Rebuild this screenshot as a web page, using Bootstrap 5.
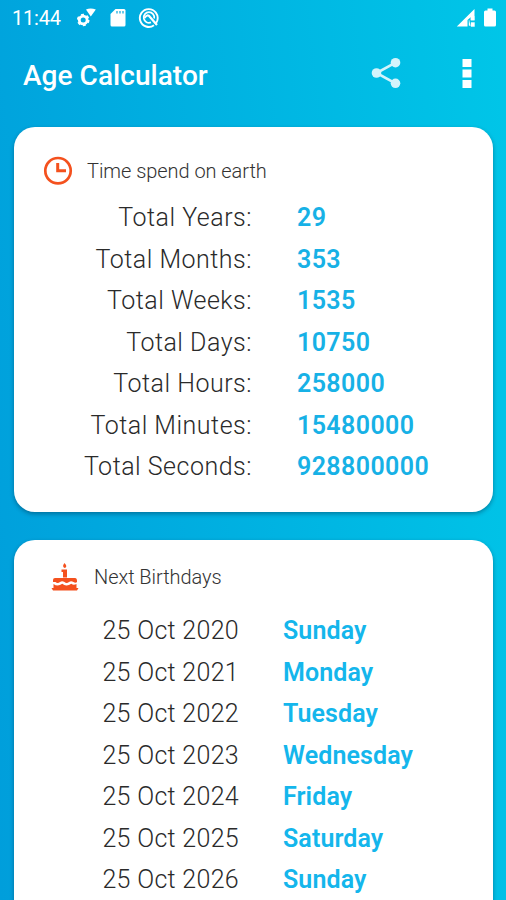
<!DOCTYPE html>
<html lang="en">
<head>
<meta charset="utf-8">
<meta name="viewport" content="width=device-width, initial-scale=1">
<title>Age Calculator</title>
<link href="https://cdn.jsdelivr.net/npm/bootstrap@5.3.0/dist/css/bootstrap.min.css" rel="stylesheet">
<style>
body{font-family:Roboto,"Noto Sans",sans-serif;height:900px;overflow:hidden;background:linear-gradient(84deg,#009edb 0%,#00c6e8 100%)}
.statusbar{height:36px;padding:0 9px 0 12px;font-size:20px;font-weight:450;letter-spacing:-.2px;line-height:36px}
.sd-icon{margin-left:13px}
.sync-icon{margin-left:12px}
.battery-icon{margin-left:8px}
.appbar{height:91px;padding:0 33px 14px 23px}
.appbar h1{font-size:28px;font-weight:500;letter-spacing:.05px;line-height:32px;padding-top:2px}
.share-icon{margin-bottom:3px}
.more-icon{margin:0 0 3px 60px}
.panel{margin:0 13px 0 14px;border:0;border-radius:21px;box-shadow:0 2px 4px rgba(0,50,80,.45)}
.panel-time{height:385px;margin-bottom:28px;padding-top:29px}
.panel-birth{height:400px;padding-top:22px}
.panel-title{font-size:20px;line-height:30px;letter-spacing:-.05px;color:#333;font-weight:330}
.clock-icon{margin-left:29px;margin-right:14px}
.cake-icon{margin-left:37px;margin-right:15px}
.line{line-height:41.5px;font-size:25px;color:#2a2a2a}
.line .key{font-weight:300;text-align:right;white-space:nowrap}
.line .val{font-weight:600}
.panel-time .lines{padding-top:11px}
.panel-time .key{width:238px;letter-spacing:.5px}
.panel-time .val{margin-left:45px;letter-spacing:.4px;color:#17b1e6}
.panel-birth .lines{padding-top:18px}
.panel-birth .key{width:225px;letter-spacing:.3px}
.panel-birth .val{margin-left:44px;letter-spacing:.1px;color:#14b6ec}
</style>
</head>
<body class="d-flex flex-column">
<header class="text-white">
<div class="statusbar d-flex align-items-center">
<span>11:44</span>
<svg class="ms-3" width="20" height="20" viewBox="0 0 20 20"><circle cx="6.200" cy="12" r="3.900" fill="none" stroke="#fff" stroke-width="2.800"/><circle cx="6.200" cy="12" r="5.500" fill="none" stroke="#fff" stroke-width="1.600" stroke-dasharray="3 2.760"/><path d="M9 1.500Q13.500-.5 18.800 1.500L13.800 8.500Z" fill="#fff"/></svg>
<svg class="sd-icon" width="16" height="20" viewBox="0 0 16 20"><path d="M5.500 1H14Q15.500 1 15.500 2.500V17Q15.500 18.500 14 18.500H2Q.5 18.500.5 17V6Z" fill="#fff"/><path d="M7 3v2.500M10 3v2.500M13 3v2.500" stroke="#08a9dd" stroke-width="1.200"/></svg>
<svg class="sync-icon" width="22" height="22" viewBox="0 0 22 22"><path d="M16 18.200A8.900 8.900 0 1 1 19.300 13.500Q18.500 16 17 17" fill="none" stroke="#fff" stroke-width="1.900"/><path d="M13 15.400A5.300 5.300 0 1 1 16.200 11.500" fill="none" stroke="#fff" stroke-width="1.700"/><path d="M6.500 11Q9.500 6.500 12 10L19 18" fill="none" stroke="#fff" stroke-width="2.200"/></svg>
<svg class="ms-auto" width="20" height="20" viewBox="0 0 20 20"><path d="M.8 18.500L18.500 1V9H15L11.500 12V18.500Z" fill="#fff"/><path d="M18.500 8.500V12.200H14.800V8.500M13 12V17.500H14.500M15 14.500H18.500V18.500H15Z" fill="#fff" stroke="#fff" stroke-width=".4"/></svg>
<svg class="battery-icon" width="13" height="20" viewBox="0 0 13 20"><path d="M3.500 2.500V.5H8.500V2.500H10.500Q12 2.500 12 4V17Q12 18.500 10.500 18.500H1.500Q0 18.500 0 17V4Q0 2.500 1.500 2.500Z" fill="#fff"/></svg>
</div>
<div class="appbar d-flex align-items-center">
<h1 class="mb-0">Age Calculator</h1>
<svg class="share-icon ms-auto" width="30" height="32" viewBox="0 0 30 32"><g fill="#d3f4fc"><circle cx="5.500" cy="16" r="4.800"/><circle cx="24.500" cy="5.700" r="4.800"/><circle cx="24.500" cy="26.300" r="4.800"/></g><path d="M24.500 5.700L5.500 16L24.500 26.300" fill="none" stroke="#d3f4fc" stroke-width="2.600"/></svg>
<svg class="more-icon" width="12" height="32" viewBox="0 0 12 32"><path d="M1.500 2h9v8h-9zM1.500 12.500h9v8h-9zM1.500 23h9v8h-9z" fill="#fff"/></svg>
</div>
</header>
<main>
<section class="panel panel-time card">
<div class="panel-title d-flex align-items-center">
<svg class="clock-icon" width="30" height="30" viewBox="0 0 30 30"><circle cx="15" cy="14.700" r="12.700" fill="none" stroke="#f4511e" stroke-width="2.700"/><path d="M14.700 7V14.700H23" fill="none" stroke="#f4511e" stroke-width="3"/></svg>
<span>Time spend on earth</span></div>
<div class="lines">
<div class="line d-flex"><span class="key">Total Years:</span><span class="val">29</span></div>
<div class="line d-flex"><span class="key">Total Months:</span><span class="val">353</span></div>
<div class="line d-flex"><span class="key">Total Weeks:</span><span class="val">1535</span></div>
<div class="line d-flex"><span class="key">Total Days:</span><span class="val">10750</span></div>
<div class="line d-flex"><span class="key">Total Hours:</span><span class="val">258000</span></div>
<div class="line d-flex"><span class="key">Total Minutes:</span><span class="val">15480000</span></div>
<div class="line d-flex"><span class="key">Total Seconds:</span><span class="val">928800000</span></div>
</div>
</section>
<section class="panel panel-birth card">
<div class="panel-title d-flex align-items-center">
<svg class="cake-icon" width="28" height="30" viewBox="0 0 28 30"><g fill="#f4511e"><path d="M13.500 1Q17 4.500 13.800 6Q10.500 4.500 13.500 1ZM10.500 7.500H16V15.500H12V10H10.500ZM4 16H24Q26 16 26 19V20Q24.500 21.500 22.500 20Q20 18.500 18 20Q15.500 22 13.500 20Q11 18.500 9 20Q6.500 22 4.500 20L2 20V18Q2 16 4 16Z"/><path d="M2.500 22Q4.500 23.500 6.700 23.500T11.300 21.800Q13.500 23.700 15.700 23.500T20.300 21.800Q22.500 23.500 25.500 22V26H2.500ZM.5 26H27.500L26 28.500H2Z"/></g></svg>
<span>Next Birthdays</span></div>
<div class="lines">
<div class="line d-flex"><span class="key">25 Oct 2020</span><span class="val">Sunday</span></div>
<div class="line d-flex"><span class="key">25 Oct 2021</span><span class="val">Monday</span></div>
<div class="line d-flex"><span class="key">25 Oct 2022</span><span class="val">Tuesday</span></div>
<div class="line d-flex"><span class="key">25 Oct 2023</span><span class="val">Wednesday</span></div>
<div class="line d-flex"><span class="key">25 Oct 2024</span><span class="val">Friday</span></div>
<div class="line d-flex"><span class="key">25 Oct 2025</span><span class="val">Saturday</span></div>
<div class="line d-flex"><span class="key">25 Oct 2026</span><span class="val">Sunday</span></div>
</div>
</section>
</main>
<script src="https://cdn.jsdelivr.net/npm/bootstrap@5.3.0/dist/js/bootstrap.bundle.min.js"></script>
</body>
</html>
